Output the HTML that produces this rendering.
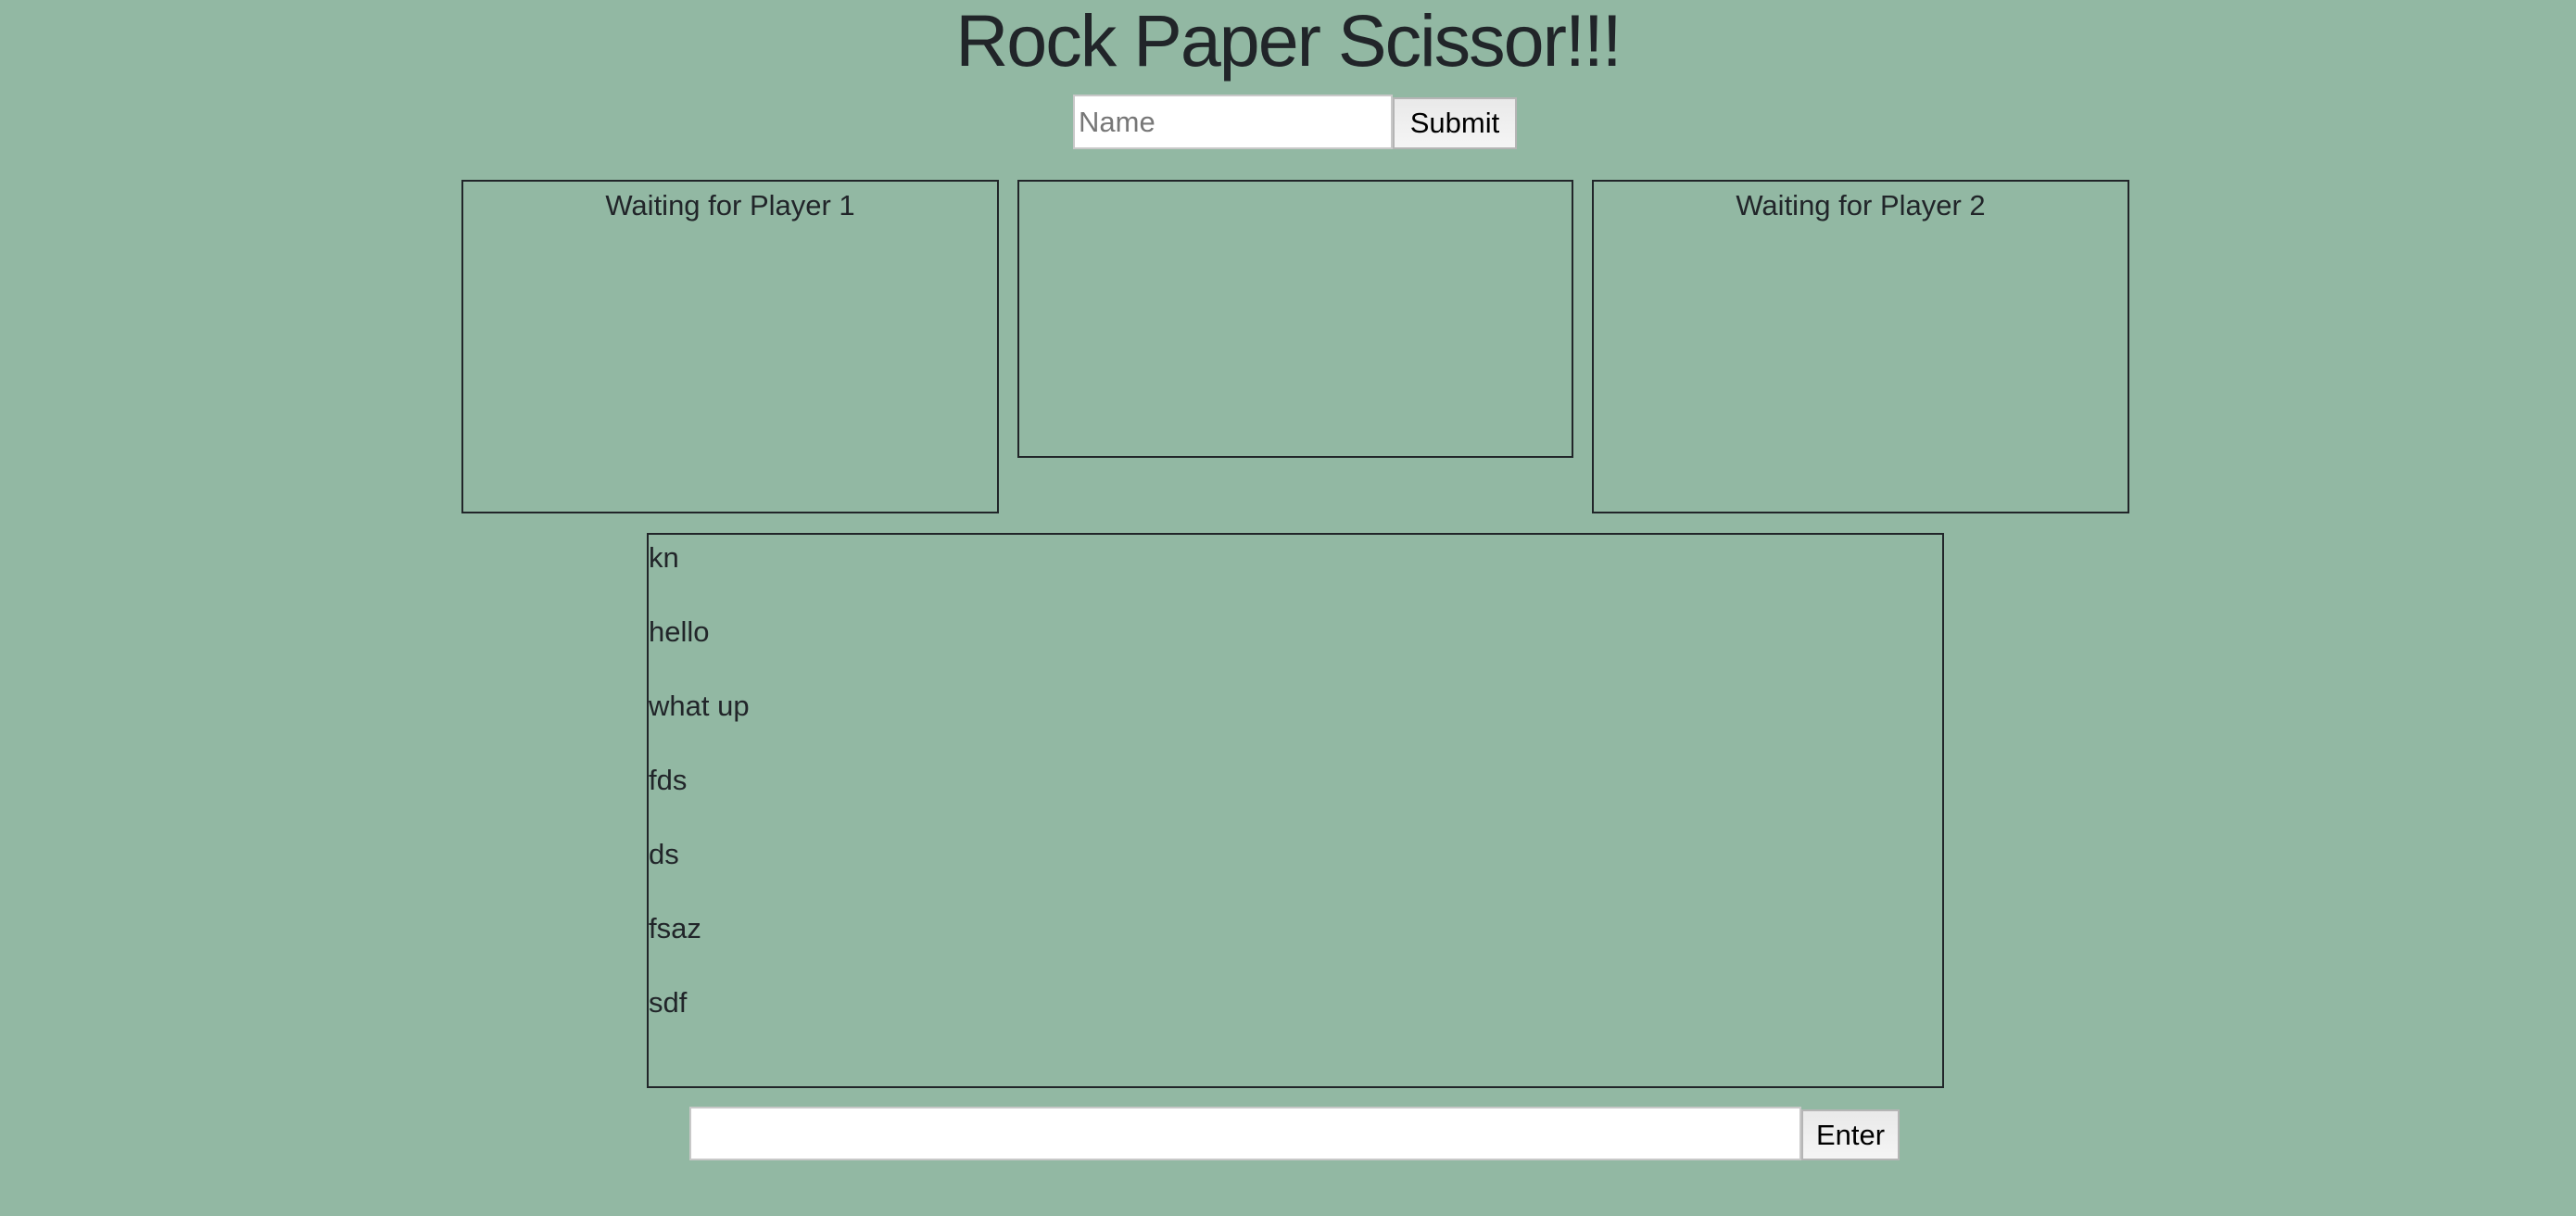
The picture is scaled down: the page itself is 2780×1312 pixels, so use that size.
<!DOCTYPE html>
<html><head><meta charset="utf-8"><style>
html,body{margin:0;padding:0;width:2780px;height:1312px;background:#92b8a3;overflow:hidden;font-family:"Liberation Sans",sans-serif;color:#212529}
.a{position:absolute;box-sizing:border-box}
.box{border:2px solid #212529}
h1{position:absolute;left:0;width:2780px;top:0;margin:0;text-align:center;font-size:79px;font-weight:normal;line-height:88px;letter-spacing:-2px}
.inp{background:#fff;border:2px solid #c8c8c8}
.btn{background:linear-gradient(#e9e9e9,#f5f5f5);border:2px solid #b5b5b5;color:#000;font-size:31px;text-align:center}
.wt{text-align:center;font-size:31px;line-height:36px;padding-top:8px}
.chat p{margin:0 0 31px 0;font-size:31px;line-height:49px;padding-left:0}
</style></head><body>
<h1>Rock Paper Scissor!!!</h1>
<div class="a inp" style="left:1158px;top:102px;width:345px;height:59px;color:#777;font-size:31px;line-height:55px;padding-left:4px">Name</div>
<div class="a btn" style="left:1503px;top:105px;width:134px;height:56px;line-height:52px">Submit</div>
<div class="a box wt" style="left:498px;top:194px;width:580px;height:360px">Waiting for Player 1</div>
<div class="a box" style="left:1098px;top:194px;width:600px;height:300px"></div>
<div class="a box wt" style="left:1718px;top:194px;width:580px;height:360px">Waiting for Player 2</div>
<div class="a box chat" style="left:698px;top:575px;width:1400px;height:599px;padding-left:0">
<p>kn</p><p>hello</p><p>what up</p><p>fds</p><p>ds</p><p>fsaz</p><p>sdf</p>
</div>
<div class="a inp" style="left:744px;top:1194px;width:1200px;height:58px"></div>
<div class="a btn" style="left:1944px;top:1197px;width:106px;height:55px;line-height:51px">Enter</div>
</body></html>
